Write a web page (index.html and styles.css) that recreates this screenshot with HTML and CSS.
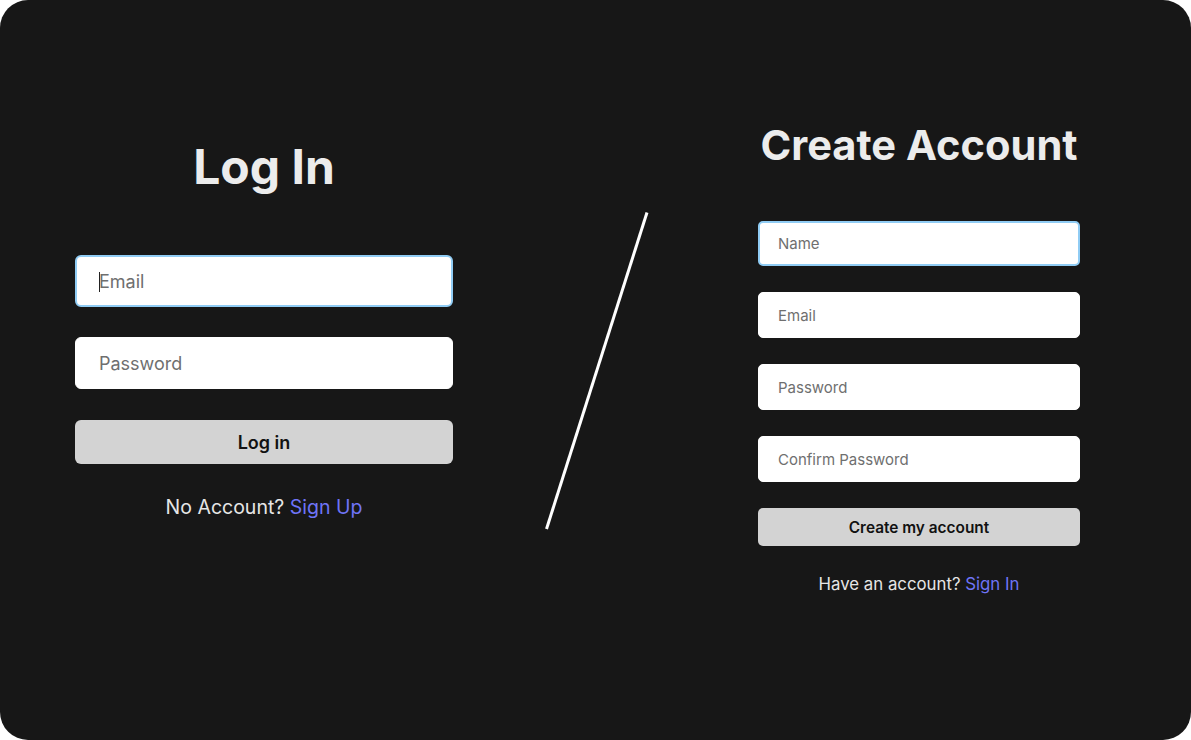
FILE: index.html
```html
<!DOCTYPE html>
<html lang="en">
<head>
<meta charset="utf-8">
<title>Log In / Create Account</title>
<link rel="stylesheet" href="styles.css">
</head>
<body>
<main class="card">
  <section class="login">
    <h1 class="login-title">Log In</h1>
    <label class="field field-lg focused">
      <input type="email" placeholder="Email">
      <span class="caret"></span>
    </label>
    <label class="field field-lg">
      <input type="password" placeholder="Password">
    </label>
    <button class="btn btn-lg">Log in</button>
    <p class="switch switch-lg">No Account? <a href="#">Sign Up</a></p>
  </section>

  <div class="divider">
    <svg width="104" height="320" viewBox="0 0 104 320">
      <line x1="102" y1="1.5" x2="1.5" y2="318" stroke="#ffffff" stroke-width="3"/>
    </svg>
  </div>

  <section class="signup">
    <h1 class="signup-title">Create Account</h1>
    <label class="field field-sm focused first"><input type="text" placeholder="Name"></label>
    <label class="field field-sm"><input type="email" placeholder="Email"></label>
    <label class="field field-sm"><input type="password" placeholder="Password"></label>
    <label class="field field-sm"><input type="password" placeholder="Confirm Password"></label>
    <button class="btn btn-sm">Create my account</button>
    <p class="switch switch-sm">Have an account? <a href="#">Sign In</a></p>
  </section>
</main>
</body>
</html>
```

FILE: styles.css
```css
* { box-sizing: border-box; }

html, body {
  margin: 0;
  padding: 0;
  background: #ffffff;
}

body {
  font-family: Inter, "Noto Sans", "Liberation Sans", sans-serif;
}

.card {
  width: 1191px;
  height: 740px;
  border-radius: 28px;
  background: #171717;
  display: flex;
  align-items: flex-start;
  overflow: hidden;
}

/* ---------- left: log in ---------- */
.login {
  margin-left: 75px;
  width: 378px;
  padding-top: 138px;
  display: flex;
  flex-direction: column;
}

.login-title {
  margin: 0 0 59px;
  font-size: 48px;
  line-height: 58px;
  font-weight: 700;
  color: #ececec;
  text-align: center;
}

.field {
  position: relative;
  display: block;
  background: #ffffff;
  border: 1px solid #ffffff;
}

.field input {
  display: block;
  width: 100%;
  height: 100%;
  border: 0;
  outline: none;
  background: transparent;
  font-family: inherit;
  color: #222;
}

.field input::placeholder { color: #6f6f6f; }

.field.focused {
  border: 2px solid #90ccf4;
}

.field-lg {
  height: 52px;
  border-radius: 6px;
  margin-bottom: 30px;
}

.field-lg input {
  padding: 0 0 0 23px;
  font-size: 18px;
}

.field-lg.focused input { padding-left: 22px; }

.caret {
  position: absolute;
  left: 22px;
  top: 15px;
  width: 1px;
  height: 20px;
  background: #222;
}

.btn {
  display: block;
  width: 100%;
  border: 0;
  background: #d3d3d3;
  color: #111;
  font-family: inherit;
  font-weight: 600;
  cursor: pointer;
}

.btn-lg {
  height: 44px;
  border-radius: 6px;
  font-size: 18px;
  margin-top: 1px;
}

.switch {
  margin: 0;
  text-align: center;
  color: #e6e6e6;
}

.switch a {
  color: #6f74f6;
  text-decoration: none;
}

.switch-lg {
  margin-top: 32px;
  font-size: 19.5px;
  line-height: 23px;
}

/* ---------- divider ---------- */
.divider {
  margin-left: 92px;
  margin-top: 211px;
  width: 104px;
  height: 320px;
}

.divider svg { display: block; }

/* ---------- right: create account ---------- */
.signup {
  margin-left: 109px;
  width: 322px;
  padding-top: 120px;
  display: flex;
  flex-direction: column;
}

.signup-title {
  margin: 0 0 51px;
  font-size: 41.6px;
  line-height: 50px;
  font-weight: 700;
  color: #ececec;
  text-align: center;
}

.field-sm {
  height: 46px;
  border-radius: 5px;
  margin-bottom: 26px;
}

.field-sm.first {
  height: 45px;
  margin-bottom: 26px;
}

.field-sm input {
  padding: 0 0 0 19px;
  font-size: 15px;
}

.field-sm.focused input { padding-left: 18px; }

.btn-sm {
  height: 38px;
  border-radius: 5px;
  font-size: 15.4px;
}

.switch-sm {
  margin-top: 28px;
  font-size: 16.8px;
  line-height: 21px;
}
```
